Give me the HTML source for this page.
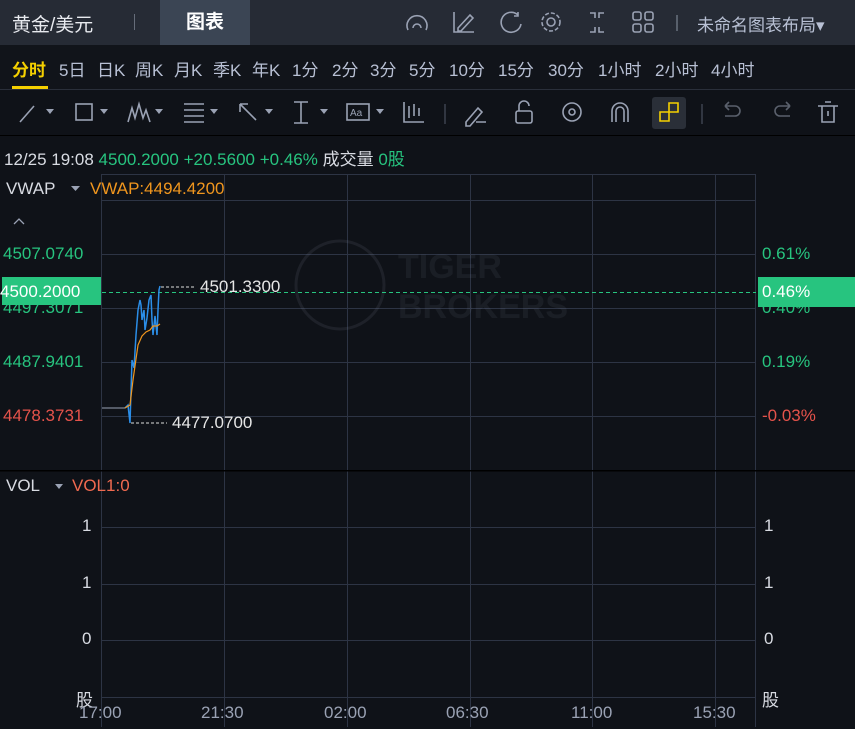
<!DOCTYPE html>
<html><head><meta charset="utf-8"><style>
*{margin:0;padding:0;box-sizing:border-box}
body{width:855px;height:729px;background:#0f1218;font-family:"Liberation Sans","Noto Sans CJK SC",sans-serif;color:#d8dbe2;position:relative;overflow:hidden}
.a{position:absolute;white-space:nowrap}
.top{position:absolute;left:0;top:0;width:855px;height:45px;background:#262b35}
.tab{position:absolute;left:160px;top:0;width:90px;height:45px;background:#3b4554;color:#fff;font-weight:bold;font-size:19px;text-align:center;line-height:45px}
.per{position:absolute;top:45px;left:0;width:855px;height:45px;background:#11141a;border-bottom:1px solid #2a2f3a}
.per span{position:absolute;top:11px;font-size:17px;color:#b8c0d4}
.g{color:#27c47f}.r{color:#e5534b}.o{color:#f0961e}
</style></head><body>
<div class="top"></div>
<div class="a" style="left:12px;top:10px;font-size:19px;color:#e8eaef">黄金/美元</div>
<div class="a" style="left:134px;top:14px;width:1px;height:16px;background:#666d7a"></div>
<div class="tab">图表</div>
<svg class="a" style="left:400px;top:8px" width="440" height="30" fill="none" stroke="#9aa2b4" stroke-width="1.6">
<path d="M8 22a10 10 0 1 1 18 0M13 20a4 4 0 1 1 8 0"/>
<path d="M54 4v20h20M58 20l12-13 3 3-12 13h-3z"/>
<path d="M118 7a10 10 0 1 0 3 9M118 4v4h-4"/>
<circle cx="151" cy="14" r="4"/><circle cx="151" cy="14" r="9" stroke-dasharray="4 2"/>
<path d="M190 5h5v5M204 5h-5v5M190 24h5v-5M204 24h-5v-5" />
<rect x="233" y="4" width="8" height="8" rx="2"/><rect x="245" y="4" width="8" height="8" rx="2"/><rect x="233" y="16" width="8" height="8" rx="2"/><rect x="245" y="16" width="8" height="8" rx="2"/>
<path d="M277 7v16" stroke="#666d7a"/>
</svg>
<div class="a" style="left:697px;top:11px;font-size:17px;color:#b8c0d4">未命名图表布局▾</div>
<div class="per">
<span style="left:12px;color:#f5d000;font-weight:bold">分时</span>
<span style="left:59px">5日</span><span style="left:97px">日K</span><span style="left:135px">周K</span><span style="left:174px">月K</span><span style="left:213px">季K</span><span style="left:252px">年K</span><span style="left:292px">1分</span><span style="left:332px">2分</span><span style="left:370px">3分</span><span style="left:409px">5分</span><span style="left:449px">10分</span><span style="left:498px">15分</span><span style="left:548px">30分</span><span style="left:598px">1小时</span><span style="left:655px">2小时</span><span style="left:711px">4小时</span>
<div class="a" style="left:12px;top:41px;width:36px;height:3px;background:#f5d000"></div>
</div>
<svg class="a" style="left:0;top:94px" width="855" height="38" fill="none" stroke="#9aa2b4" stroke-width="1.6">
<path d="M20 28l14-16"/><path d="M46 15h8l-4 5z" fill="#9aa2b4" stroke="none"/>
<rect x="76" y="10" width="16" height="16"/><path d="M100 15h8l-4 5z" fill="#9aa2b4" stroke="none"/>
<path d="M128 28l4-14 3 10 4-14 4 14 3-8 4 12"/><path d="M155 15h8l-4 5z" fill="#9aa2b4" stroke="none"/>
<path d="M184 10h20M184 16h20M184 22h20M184 28h20"/><path d="M210 15h8l-4 5z" fill="#9aa2b4" stroke="none"/>
<path d="M240 10l16 16M240 10h8M240 10v8"/><path d="M265 15h8l-4 5z" fill="#9aa2b4" stroke="none"/>
<path d="M294 8h14M294 29h14M301 8v21"/><path d="M320 15h8l-4 5z" fill="#9aa2b4" stroke="none"/>
<rect x="347" y="10" width="22" height="16"/><text x="350" y="22" font-size="10" fill="#9aa2b4" stroke="none" font-family="Liberation Sans">Aa</text><path d="M376 15h8l-4 5z" fill="#9aa2b4" stroke="none"/>
<path d="M404 8v20h20M409 12v12M414 10v12M419 14v8"/>
<path d="M445 10v20" stroke="#3a404c"/>
<path d="M466 28l12-14 4 4-12 14h-4zM476 28h10"/>
<rect x="516" y="17" width="16" height="12" rx="2"/><path d="M519 17v-5a5 5 0 0 1 10 0"/>
<circle cx="572" cy="18" r="9"/><circle cx="572" cy="18" r="3"/>
<path d="M612 28V17a8 8 0 0 1 16 0v11M616 28V17a4 4 0 0 1 8 0v11"/>
<rect x="652" y="3" width="34" height="32" rx="3" fill="#2a2f38" stroke="none"/>
<path d="M660 18h9v9h-9zM669 9h9v9h-9z" stroke="#f5d000"/>
<path d="M702 10v20" stroke="#3a404c"/>
<path d="M725 22h10a5 5 0 0 0 0-10h-10M725 12l4-4M725 12l4 4" stroke="#5a606c"/>
<path d="M790 22h-10a5 5 0 0 1 0-10h10M790 12l-4-4M790 12l-4 4" stroke="#5a606c"/>
<path d="M818 12h20M822 12v16h12V12M825 8h6M828 17v5"/>
</svg>
<div class="a" style="left:0;top:135px;width:855px;height:1px;background:#000"></div>
<div class="a" style="left:4px;top:145px;font-size:17px">12/25 19:08 <span class="g">4500.2000 +20.5600 +0.46%</span> 成交量 <span class="g">0股</span></div>
<svg class="a" style="left:0;top:0" width="855" height="729">
<g stroke="#2d3444" stroke-width="1">
<path d="M101.5 174v553M224.5 174v553M347.5 174v553M470.5 174v553M592.5 174v553M715.5 174v553M755.5 174v553"/>
<path d="M101 174.5h655M101 200.5h655M101 254.5h655M101 308.5h655M101 362.5h655M101 416.5h655M101 527.5h655M101 584.5h655M101 640.5h655M101 697.5h655"/>
</g>
<rect x="0" y="470" width="855" height="1.5" fill="#000"/>
<g opacity="0.12" stroke="#8a93a6" fill="none" stroke-width="3"><circle cx="340" cy="285" r="44"/></g>
<text x="398" y="278" font-size="34" font-weight="bold" fill="#8a93a6" opacity="0.09" font-family="Liberation Sans">TIGER</text>
<text x="398" y="318" font-size="34" font-weight="bold" fill="#8a93a6" opacity="0.09" font-family="Liberation Sans">BROKERS</text>
<path d="M102 292.5H756" stroke="#27c47f" stroke-dasharray="4 3"/>
<path d="M102 408h23" stroke="#9aa2b4"/>
<path d="M125 408L128 405L130 423L132 360L134 368L136 335L138 310L140 300L141 305L142 320L144 310L145 330L147 318L149 300L151 295L152 320L153 335L155 316L157 335L158 310L159 290L160 286" stroke="#2b8ee8" stroke-width="1.5" fill="none"/>
<path d="M125 408L130 405L133 380L138 345L142 336L146 332L150 330L153 326L157 326L160 324" stroke="#f0961e" stroke-width="1.2" fill="none"/>
<path d="M161 287h35M131 423h36" stroke="#ddd" stroke-dasharray="3 2"/>
<path d="M14 224l5-5 5 5" stroke="#9aa2b4" stroke-width="1.3" fill="none"/>
<path d="M71 186h9l-4.5 5z M55 484h8l-4 5z" fill="#9aa2b4"/>
</svg>
<div class="a" style="left:6px;top:179px;font-size:17px">VWAP</div>
<div class="a o" style="left:90px;top:179px;font-size:17px">VWAP:4494.4200</div>
<div class="a g" style="left:3px;top:244px;font-size:17px">4507.0740</div>
<div class="a g" style="left:3px;top:298px;font-size:17px">4497.3071</div>
<div class="a" style="left:2px;top:277px;width:99px;height:28px;background:#27c47f"></div>
<div class="a" style="left:0;top:282px;font-size:17px;color:#fff">4500.2000</div>
<div class="a g" style="left:3px;top:352px;font-size:17px">4487.9401</div>
<div class="a r" style="left:3px;top:406px;font-size:17px">4478.3731</div>
<div class="a" style="left:200px;top:277px;font-size:17px;color:#e6e6e6">4501.3300</div>
<div class="a" style="left:172px;top:413px;font-size:17px;color:#e6e6e6">4477.0700</div>
<div class="a g" style="left:762px;top:244px;font-size:17px">0.61%</div>
<div class="a g" style="left:762px;top:298px;font-size:17px">0.40%</div>
<div class="a" style="left:758px;top:277px;width:97px;height:30px;background:#27c47f"></div>
<div class="a" style="left:762px;top:282px;font-size:17px;color:#fff">0.46%</div>
<div class="a g" style="left:762px;top:352px;font-size:17px">0.19%</div>
<div class="a r" style="left:762px;top:406px;font-size:17px">-0.03%</div>
<div class="a" style="left:6px;top:476px;font-size:17px">VOL</div>
<div class="a" style="left:72px;top:476px;font-size:17px;color:#f06a50">VOL1:0</div>
<div class="a" style="left:82px;top:516px;font-size:17px">1</div>
<div class="a" style="left:82px;top:573px;font-size:17px">1</div>
<div class="a" style="left:82px;top:629px;font-size:17px">0</div>
<div class="a" style="left:76px;top:686px;font-size:17px">股</div>
<div class="a" style="left:764px;top:516px;font-size:17px">1</div>
<div class="a" style="left:764px;top:573px;font-size:17px">1</div>
<div class="a" style="left:764px;top:629px;font-size:17px">0</div>
<div class="a" style="left:762px;top:686px;font-size:17px">股</div>
<div class="a" style="left:79px;top:703px;font-size:17px;color:#9aa2b4">17:00</div>
<div class="a" style="left:201px;top:703px;font-size:17px;color:#9aa2b4">21:30</div>
<div class="a" style="left:324px;top:703px;font-size:17px;color:#9aa2b4">02:00</div>
<div class="a" style="left:446px;top:703px;font-size:17px;color:#9aa2b4">06:30</div>
<div class="a" style="left:571px;top:703px;font-size:17px;color:#9aa2b4">11:00</div>
<div class="a" style="left:693px;top:703px;font-size:17px;color:#9aa2b4">15:30</div>
</body></html>
